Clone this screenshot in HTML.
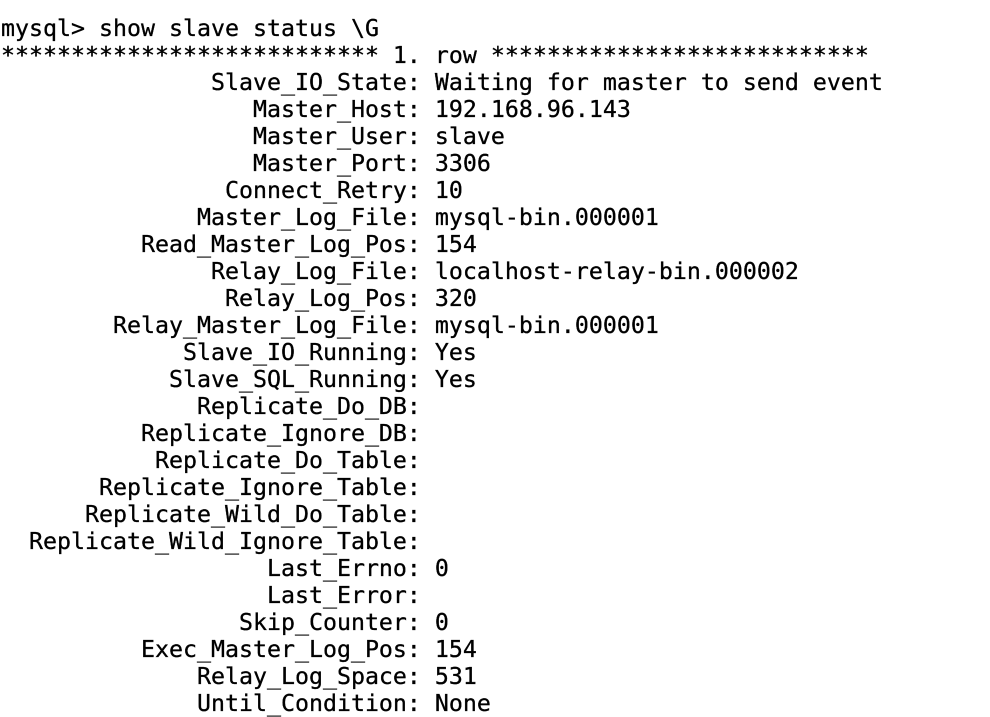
<html><head><style>
body{margin:0;background:#fff;width:990px;height:712px;overflow:hidden}
pre{margin:0;position:absolute;left:1px;top:15px;font-family:"DejaVu Sans Mono",monospace;font-size:23.25px;line-height:27px;color:#000;-webkit-text-stroke:0.3px #000}
</style></head><body><pre>mysql&gt; show slave status \G
*************************** 1. row ***************************
               Slave_IO_State: Waiting for master to send event
                  Master_Host: 192.168.96.143
                  Master_User: slave
                  Master_Port: 3306
                Connect_Retry: 10
              Master_Log_File: mysql-bin.000001
          Read_Master_Log_Pos: 154
               Relay_Log_File: localhost-relay-bin.000002
                Relay_Log_Pos: 320
        Relay_Master_Log_File: mysql-bin.000001
             Slave_IO_Running: Yes
            Slave_SQL_Running: Yes
              Replicate_Do_DB: 
          Replicate_Ignore_DB: 
           Replicate_Do_Table: 
       Replicate_Ignore_Table: 
      Replicate_Wild_Do_Table: 
  Replicate_Wild_Ignore_Table: 
                   Last_Errno: 0
                   Last_Error: 
                 Skip_Counter: 0
          Exec_Master_Log_Pos: 154
              Relay_Log_Space: 531
              Until_Condition: None</pre></body></html>
